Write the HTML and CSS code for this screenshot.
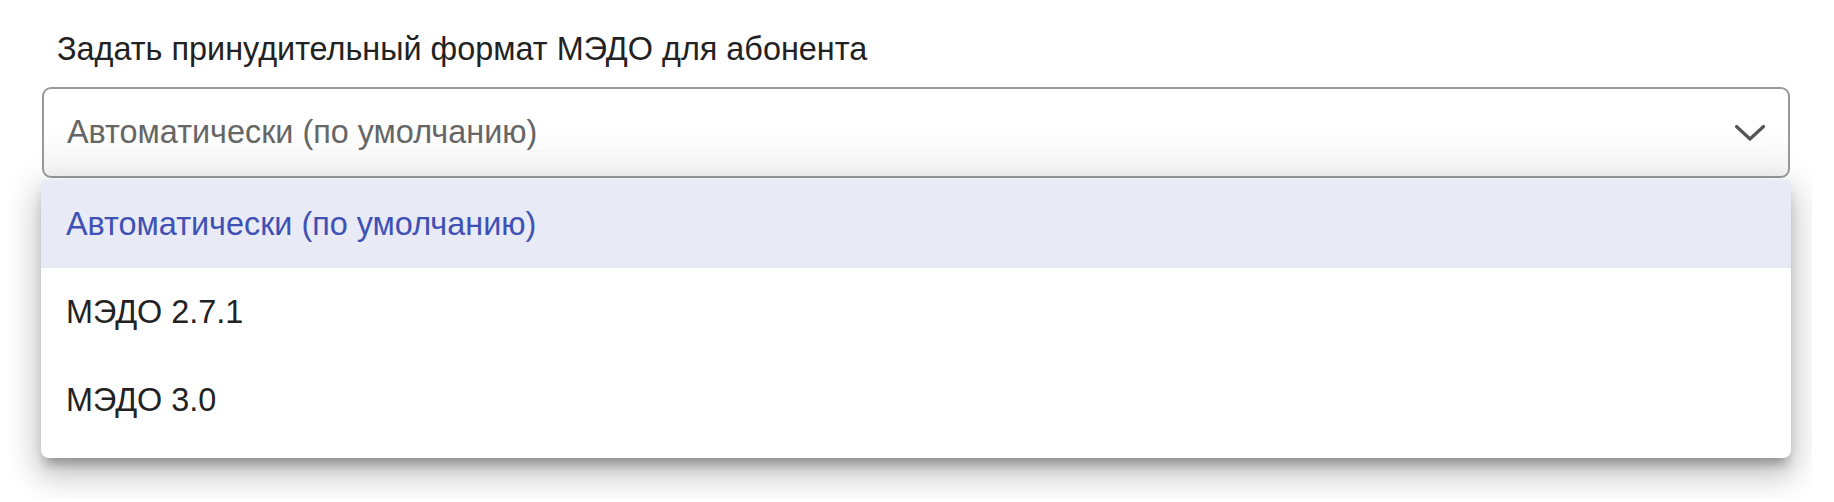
FILE: index.html
```html
<!DOCTYPE html>
<html lang="ru">
<head>
    <meta charset="UTF-8">
    <meta name="viewport" content="width=device-width, initial-scale=1.0">
    <title>Формат МЭДО</title>
    <link rel="stylesheet" href="styles.css">
</head>
<body>
    <div class="page">
        <div class="field">
            <label class="field-label" for="medoFormat">Задать принудительный формат МЭДО для абонента</label>
            <div class="select" id="medoFormat">
                <span class="select-value">Автоматически (по умолчанию)</span>
                <svg class="chevron" width="32" height="18" viewBox="0 0 32 18">
                    <path d="M2.5 2.5 L16 15 L29.5 2.5" fill="none" stroke="#555" stroke-width="3.2" stroke-linecap="round" stroke-linejoin="round"/>
                </svg>
            </div>
            <ul class="menu">
                <li class="menu-item selected">Автоматически (по умолчанию)</li>
                <li class="menu-item">МЭДО 2.7.1</li>
                <li class="menu-item">МЭДО 3.0</li>
            </ul>
        </div>
    </div>
</body>
</html>
```

FILE: styles.css
```css
body {
    margin: 0;
    background: #fff;
}
.page {
    width: 1812px;
    height: 499px;
    overflow: hidden;
    padding: 31px 0 0 42px;
    box-sizing: border-box;
}
.field {
    position: relative;
    width: 1748px;
}
.field-label {
    display: block;
    margin: 0 0 20px 15px;
    font-family: "Liberation Sans", Arial, sans-serif;
    font-size: 32.4px;
    line-height: 36px;
    color: #222;
}
.select {
    display: flex;
    align-items: center;
    justify-content: space-between;
    height: 91px;
    padding: 0 22px 0 23px;
    border: 2px solid #9a9a9a;
    border-radius: 9px;
    box-sizing: border-box;
    background: linear-gradient(#fff 45%, #f5f5f5);
}
.select-value {
    font-family: "Liberation Sans", Arial, sans-serif;
    font-size: 32.4px;
    color: #666;
}
.menu {
    position: absolute;
    left: -1px;
    right: -1px;
    top: calc(100% + 2px);
    margin: 0;
    padding: 0 0 14px;
    list-style: none;
    background: #fff;
    border-radius: 0 0 8px 8px;
    box-shadow: 0 10px 12px -4px rgba(0, 0, 0, 0.3), 0 18px 30px 4px rgba(0, 0, 0, 0.15), 0 6px 36px 6px rgba(0, 0, 0, 0.09);
}
.menu-item {
    height: 88px;
    display: flex;
    align-items: center;
    padding-left: 25px;
    font-family: "Liberation Sans", Arial, sans-serif;
    font-size: 32.4px;
    color: #222;
}
.menu-item.selected {
    background: #e8eaf6;
    color: #3f51b5;
}
```
